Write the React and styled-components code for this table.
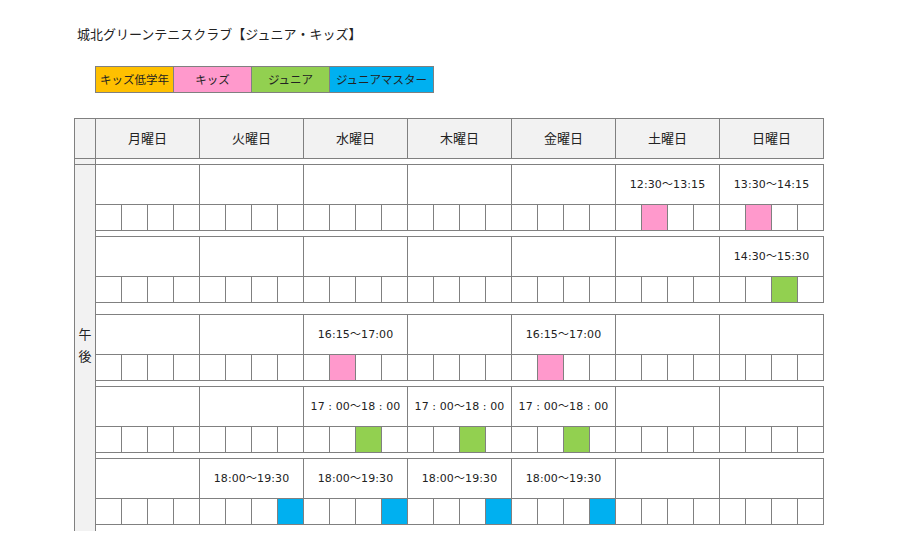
import React from "react";
import styled, { createGlobalStyle } from "styled-components";

const GlobalStyle = createGlobalStyle`
  html, body {
    margin: 0;
    padding: 0;
    background: #ffffff;
  }
  body {
    font-family: "Noto Sans CJK JP", "Noto Sans", sans-serif;
    color: #222222;
  }
`;

const LINE = "#808080";
const HEAD_BG = "#f2f2f2";

const colors = {
  orange: "#ffc000",
  pink: "#ff99cc",
  green: "#92d050",
  blue: "#00b0f0",
};

const Page = styled.div`
  width: 900px;
  height: 550px;
  box-sizing: border-box;
  padding: 25px 0 0 74px;
  overflow: hidden;
`;

const Title = styled.h1`
  margin: 0 0 23px 3px;
  font-size: 13px;
  line-height: 18px;
  font-weight: normal;
`;

const Legend = styled.div`
  display: flex;
  width: max-content;
  margin: 0 0 25px 21px;
  border-top: 1px solid ${LINE};
  border-bottom: 1px solid ${LINE};
  border-left: 1px solid ${LINE};
`;

const LegendItem = styled.div`
  box-sizing: border-box;
  width: ${(p) => p.$w}px;
  height: 25px;
  padding-bottom: 2px;
  border-right: 1px solid ${LINE};
  background: ${(p) => colors[p.$color]};
  font-size: 11.5px;
  display: flex;
  align-items: center;
  justify-content: center;
`;

const Frame = styled.div`
  display: flex;
  align-items: stretch;
`;

const SideCol = styled.div`
  box-sizing: border-box;
  width: 22px;
  border-left: 1px solid ${LINE};
  border-right: 1px solid ${LINE};
  background: ${HEAD_BG};
  display: flex;
  flex-direction: column;
`;

const SideHead = styled.div`
  box-sizing: border-box;
  height: 41px;
  border-top: 1px solid ${LINE};
  border-bottom: 1px solid ${LINE};
`;

const SideGap = styled.div`
  box-sizing: border-box;
  height: 6px;
  border-bottom: 1px solid ${LINE};
`;

const SideLabel = styled.div`
  flex: 1;
  display: flex;
  align-items: center;
  justify-content: center;
  font-size: 13px;
  line-height: 22px;
  text-align: center;
  padding-bottom: 6px;
`;

const Main = styled.div`
  display: flex;
  flex-direction: column;
  margin-left: -1px;
`;

const HeadRow = styled.div`
  display: flex;
  height: 41px;
  box-sizing: border-box;
  border-top: 1px solid ${LINE};
  border-bottom: 1px solid ${LINE};
  border-left: 1px solid ${LINE};
  background: ${HEAD_BG};
  margin-bottom: 5px;
`;

const HeadCell = styled.div`
  box-sizing: border-box;
  width: 104px;
  padding-bottom: 3px;
  border-right: 1px solid ${LINE};
  font-size: 13px;
  display: flex;
  align-items: center;
  justify-content: center;
`;

const Block = styled.div`
  border-top: 1px solid ${LINE};
  border-left: 1px solid ${LINE};
  margin-bottom: ${(p) => p.$gap}px;
`;

const TimeRow = styled.div`
  display: flex;
`;

const TimeCell = styled.div`
  box-sizing: border-box;
  width: 104px;
  height: 40px;
  padding-bottom: 4px;
  border-right: 1px solid ${LINE};
  border-bottom: 1px solid ${LINE};
  font-family: "DejaVu Sans", "Noto Sans CJK JP", sans-serif;
  font-size: 11px;
  letter-spacing: 0.1px;
  display: flex;
  align-items: center;
  justify-content: center;
  white-space: nowrap;
`;

const SlotRow = styled.div`
  display: flex;
`;

const Slot = styled.div`
  box-sizing: border-box;
  width: 26px;
  height: 26px;
  border-right: 1px solid ${LINE};
  border-bottom: 1px solid ${LINE};
  background: ${(p) => (p.$color ? colors[p.$color] : "#ffffff")};
`;

const legend = [
  { label: "キッズ低学年", color: "orange", w: 78 },
  { label: "キッズ", color: "pink", w: 78 },
  { label: "ジュニア", color: "green", w: 78 },
  { label: "ジュニアマスター", color: "blue", w: 104 },
];

const days = ["月曜日", "火曜日", "水曜日", "木曜日", "金曜日", "土曜日", "日曜日"];

const t1700 = "17 : 00～18 : 00";
const t1800 = "18:00～19:30";

// each block: time per day index, and the coloured slot per day index
const blocks = [
  {
    gap: 5,
    times: { 5: "12:30～13:15", 6: "13:30～14:15" },
    marks: { 5: [1, "pink"], 6: [1, "pink"] },
  },
  {
    gap: 11,
    times: { 6: "14:30～15:30" },
    marks: { 6: [2, "green"] },
  },
  {
    gap: 5,
    times: { 2: "16:15～17:00", 4: "16:15～17:00" },
    marks: { 2: [1, "pink"], 4: [1, "pink"] },
  },
  {
    gap: 5,
    times: { 2: t1700, 3: t1700, 4: t1700 },
    marks: { 2: [2, "green"], 3: [2, "green"], 4: [2, "green"] },
  },
  {
    gap: 6,
    times: { 1: t1800, 2: t1800, 3: t1800, 4: t1800 },
    marks: { 1: [3, "blue"], 2: [3, "blue"], 3: [3, "blue"], 4: [3, "blue"] },
  },
];

function ScheduleBlock({ block }) {
  return (
    <Block $gap={block.gap}>
      <TimeRow>
        {days.map((d, i) => (
          <TimeCell key={d}>{block.times[i] || ""}</TimeCell>
        ))}
      </TimeRow>
      <SlotRow>
        {days.map((d, i) =>
          [0, 1, 2, 3].map((s) => {
            const mark = block.marks[i];
            const color = mark && mark[0] === s ? mark[1] : null;
            return <Slot key={d + s} $color={color} />;
          })
        )}
      </SlotRow>
    </Block>
  );
}

export default function App() {
  return (
    <>
      <GlobalStyle />
      <Page>
        <Title>城北グリーンテニスクラブ【ジュニア・キッズ】</Title>
        <Legend>
          {legend.map((l) => (
            <LegendItem key={l.label} $color={l.color} $w={l.w}>
              {l.label}
            </LegendItem>
          ))}
        </Legend>
        <Frame>
          <SideCol>
            <SideHead />
            <SideGap />
            <SideLabel>
              午<br />後
            </SideLabel>
          </SideCol>
          <Main>
            <HeadRow>
              {days.map((d) => (
                <HeadCell key={d}>{d}</HeadCell>
              ))}
            </HeadRow>
            {blocks.map((b, i) => (
              <ScheduleBlock key={i} block={b} />
            ))}
          </Main>
        </Frame>
      </Page>
    </>
  );
}
